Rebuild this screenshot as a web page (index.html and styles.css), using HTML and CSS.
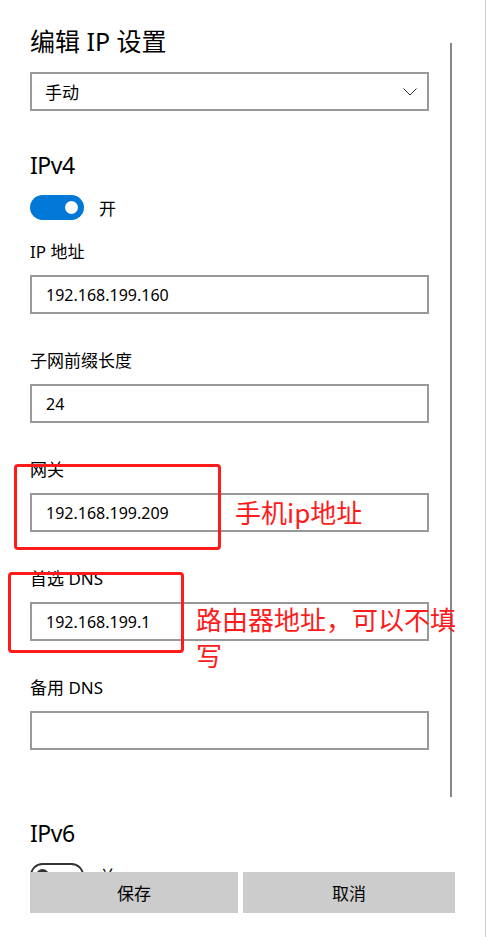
FILE: index.html
```html
<!DOCTYPE html>
<html lang="zh-CN">

<head>
    <meta charset="UTF-8" />
    <meta name="viewport" content="width=device-width, initial-scale=1.0" />
    <title>编辑 IP 设置</title>
    <link rel="stylesheet" href="styles.css">
</head>

<body>
    <div class="window">
        <div class="pane">
            <div class="scroll">
                <div class="content">
                    <h1 class="title">编辑 IP 设置</h1>

                    <div class="select">
                        <span>手动</span>
                        <svg class="chevron" width="14" height="8" viewBox="0 0 14 8">
                            <polyline points="0.5,0.5 7,7 13.5,0.5" fill="none" stroke="#333" stroke-width="1" />
                        </svg>
                    </div>

                    <h2 class="section">IPv4</h2>
                    <div class="toggle-row">
                        <span class="toggle on"><span class="knob"></span></span>
                        <span class="toggle-label">开</span>
                    </div>

                    <div class="field">
                        <label for="ip">IP 地址</label>
                        <input type="text" id="ip" value="192.168.199.160" />
                    </div>
                    <div class="field">
                        <label for="prefix">子网前缀长度</label>
                        <input type="text" id="prefix" value="24" />
                    </div>
                    <div class="field">
                        <label for="gateway">网关</label>
                        <input type="text" id="gateway" value="192.168.199.209" />
                    </div>
                    <div class="field">
                        <label for="dns1">首选 DNS</label>
                        <input type="text" id="dns1" value="192.168.199.1" />
                    </div>
                    <div class="field">
                        <label for="dns2">备用 DNS</label>
                        <input type="text" id="dns2" value="" />
                    </div>

                    <h2 class="section section-v6">IPv6</h2>
                    <div class="toggle-row">
                        <span class="toggle off"><span class="knob"></span></span>
                        <span class="toggle-label">关</span>
                    </div>
                </div>
                <div class="scrollbar"></div>
            </div>

            <div class="actions">
                <button type="button" class="btn-save">保存</button>
                <button type="button" class="btn-cancel">取消</button>
            </div>
        </div>
        <div class="edge"></div>
    </div>

    <!-- 标注 -->
    <div class="mark mark-gateway"></div>
    <div class="note note-gateway">手机ip地址</div>
    <div class="mark mark-dns"></div>
    <div class="note note-dns">路由器地址，可以不填写</div>
</body>

</html>
```

FILE: styles.css
```css
body {
    margin: 0;
    background-color: #ffffff;
    font-family: "Noto Sans", "Noto Sans CJK SC", sans-serif;
    color: #000000;
    position: relative;
}

.window {
    display: flex;
    height: 937px;
}

.pane {
    width: 485px;
    display: flex;
    flex-direction: column;
}

.scroll {
    display: flex;
    height: 872px;
    overflow: hidden;
}

.content {
    width: 399px;
    margin-left: 30px;
}

.scrollbar {
    width: 2px;
    height: 754px;
    margin-top: 43px;
    margin-left: 21px;
    background-color: #868686;
}

.edge {
    width: 1px;
    background-color: #cfcfcf;
}

.title {
    margin: 24px 0 0;
    font-size: 25px;
    line-height: 34px;
    font-weight: 400;
}

.select {
    box-sizing: border-box;
    height: 39px;
    margin-top: 14px;
    border: 2px solid #999999;
    padding: 0 10px 0 13px;
    display: flex;
    align-items: center;
    justify-content: space-between;
    font-size: 17px;
}

.chevron {
    display: block;
}

.section {
    margin: 38px 0 0;
    font-size: 23px;
    line-height: 32px;
    font-weight: 400;
    letter-spacing: -0.5px;
}

.section-v6 {
    margin-top: 67px;
}

.toggle-row {
    display: flex;
    align-items: center;
    margin-top: 14px;
    height: 25px;
}

.toggle {
    box-sizing: border-box;
    width: 54px;
    height: 25px;
    border-radius: 13px;
    display: flex;
    align-items: center;
}

.toggle.on {
    background-color: #0078d7;
    justify-content: flex-end;
    padding-right: 6px;
}

.toggle.off {
    border: 2px solid #333333;
    padding-left: 4px;
}

.knob {
    width: 13px;
    height: 13px;
    border-radius: 50%;
}

.toggle.on .knob {
    background-color: #ffffff;
}

.toggle.off .knob {
    background-color: #333333;
}

.toggle-label {
    margin-left: 15px;
    font-size: 17px;
}

.field {
    margin-bottom: 35px;
}

.toggle-row + .field {
    margin-top: 20px;
}

.field label {
    display: block;
    font-size: 17px;
    line-height: 24px;
    margin-bottom: 11px;
}

.field input {
    box-sizing: border-box;
    display: block;
    width: 100%;
    height: 39px;
    margin: 0;
    padding: 0 14px;
    border: 2px solid #999999;
    border-radius: 0;
    background-color: #ffffff;
    font-family: "Noto Sans", "Noto Sans CJK SC", sans-serif;
    font-size: 16px;
    color: #000000;
    outline: none;
}

.actions {
    display: grid;
    grid-template-columns: 208px 212px;
    column-gap: 5px;
    margin-left: 30px;
}

.actions button {
    height: 41px;
    border: none;
    padding: 0;
    background-color: #cccccc;
    font-family: "Noto Sans", "Noto Sans CJK SC", sans-serif;
    font-size: 17px;
    color: #000000;
    cursor: pointer;
}

.mark {
    position: absolute;
    box-sizing: border-box;
    border: 3px solid #fe1b1b;
    border-radius: 4px;
}

.mark-gateway {
    left: 14px;
    top: 464px;
    width: 207px;
    height: 86px;
}

.mark-dns {
    left: 8px;
    top: 572px;
    width: 176px;
    height: 81px;
}

.note {
    position: absolute;
    font-family: "Noto Sans CJK SC", sans-serif;
    font-size: 26px;
    line-height: 36px;
    color: #fe1b1b;
}

.note-gateway {
    left: 235px;
    top: 494px;
}

.note-dns {
    left: 196px;
    top: 601px;
    width: 268px;
}
```
